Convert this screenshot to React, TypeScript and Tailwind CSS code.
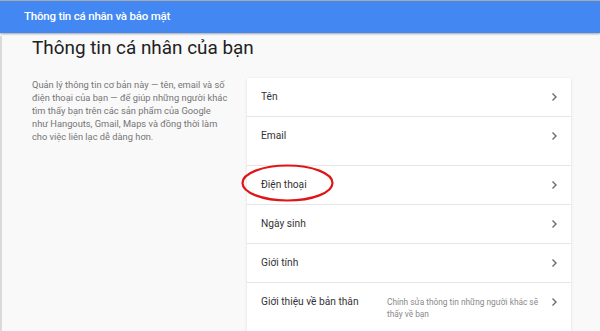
interface InfoRow {
  label: string;
  description?: string;
  extraSpace?: boolean;
}

const rows: InfoRow[] = [
  { label: "Tên" },
  { label: "Email", extraSpace: true },
  { label: "Điện thoại" },
  { label: "Ngày sinh" },
  { label: "Giới tính" },
  {
    label: "Giới thiệu về bản thân",
    description: "Chính sửa thông tin những người khác sẽ thấy về bạn",
  },
];

const introLines = [
  "Quản lý thông tin cơ bản này — tên, email và số",
  "điện thoại của bạn — để giúp những người khác",
  "tìm thấy bạn trên các sản phẩm của Google",
  "như Hangouts, Gmail, Maps và đồng thời làm",
  "cho việc liên lạc dễ dàng hơn.",
];

function Chevron() {
  return (
    <svg width="7" height="10" viewBox="0 0 7 10" aria-hidden="true" className="mt-[2px] shrink-0">
      <path d="M1.5 1.5 5 5 1.5 8.5" fill="none" stroke="#6b6b6b" strokeWidth="1.4" />
    </svg>
  );
}

export default function App() {
  return (
    <div className="relative h-[331px] w-[600px] overflow-hidden bg-[#f9f9f9] font-['Roboto','Liberation_Sans',sans-serif]">
      <header className="flex h-[33px] items-center border-t border-[#a9a9a9] bg-[#4287f2] pl-6 shadow-[0_1px_2px_rgba(0,0,0,0.35)]">
        <span className="text-[11.5px] font-medium tracking-[-0.2px] text-white">Thông tin cá nhân và bảo mật</span>
      </header>

      <main className="border-l-2 border-[#dadada] pl-[30px]">
        <h1 className="mt-[3px] text-[18.9px] leading-6 text-[#212121]">Thông tin cá nhân của bạn</h1>

        <div className="mt-[18px] flex">
          <p className="w-[215px] shrink-0 whitespace-nowrap text-[9.3px] leading-[13px] text-[#757575]">
            {introLines.map((line) => (
              <span key={line} className="block">
                {line}
              </span>
            ))}
          </p>

          <section className="w-[324px] bg-white shadow-[0_1px_3px_rgba(0,0,0,0.12)]">
            {rows.map((row, index) => (
              <div
                key={row.label}
                className={`flex items-start pl-[14px] pr-[13px] pt-[12px] ${
                  row.extraSpace ? "pb-[22px]" : "pb-[12px]"
                } ${index > 0 ? "border-t border-[#e6e6e6]" : ""}`}
              >
                <span className="w-[126px] shrink-0 text-[10.2px] leading-[14px] text-[#333333]">{row.label}</span>
                <span className="flex-1 pr-[10px] pt-[1px] text-[8.3px] leading-[12px] text-[#8a8a8a]">
                  {row.description}
                </span>
                <Chevron />
              </div>
            ))}
          </section>
        </div>
      </main>

      <svg
        className="pointer-events-none absolute left-[241px] top-[164px]"
        width="93"
        height="38"
        viewBox="0 0 93 38"
        aria-hidden="true"
      >
        <ellipse cx="46.5" cy="19" rx="45" ry="17.5" fill="none" stroke="#e01515" strokeWidth="2.2" />
      </svg>
    </div>
  );
}
